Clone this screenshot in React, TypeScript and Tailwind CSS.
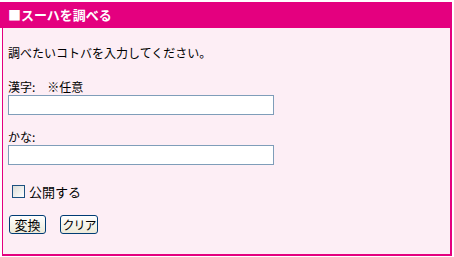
import React from "react";

const font = { fontFamily: '"Noto Sans CJK JP", "MS PGothic", sans-serif' };

export default function App() {
  return (
    <div className="w-[454px] h-[257px] bg-white pt-[2px]" style={font}>
      <div className="w-[452px]">
        <div className="h-[26px] bg-[#e4007f] text-white font-bold text-[13px] leading-[26px] pl-[8px]">
          ■スーハを調べる
        </div>
        <div className="ml-[2px] h-[228px] border-l border-r-2 border-b-2 border-[#e4007f] bg-[#fdeef5] pl-[5px] pt-[18px] text-black text-[12px] leading-[14px]">
          <div>調べたいコトバを入力してください。</div>
          <div className="mt-[20px]">漢字:　※任意</div>
          <input type="text" className="block mt-[1px] w-[266px] h-[20px] border border-[#7f9db9] bg-white outline-none" />
          <div className="mt-[15px]">かな:</div>
          <input type="text" className="block mt-[1px] w-[266px] h-[20px] border border-[#7f9db9] bg-white outline-none" />
          <div className="mt-[20px] ml-[4px] flex items-center gap-[4px] h-[13px]">
            <span className="block w-[13px] h-[13px] border border-[#1c5180] bg-gradient-to-br from-[#dcdcd7] to-white" />
            <span className="text-[13px]">公開する</span>
          </div>
          <div className="mt-[17px] ml-[1px] flex gap-[14px]">
            <button className="w-[37px] h-[19px] px-0 whitespace-nowrap rounded-[3px] border border-[#003c74] bg-gradient-to-b from-white to-[#ece9d8] text-[13px] leading-[17px] text-black">
              変換
            </button>
            <button className="w-[38px] h-[19px] px-0 whitespace-nowrap rounded-[3px] border border-[#003c74] bg-gradient-to-b from-white to-[#ece9d8] text-[12px] leading-[17px] text-black tracking-[-1px]">
              クリア
            </button>
          </div>
        </div>
      </div>
    </div>
  );
}
